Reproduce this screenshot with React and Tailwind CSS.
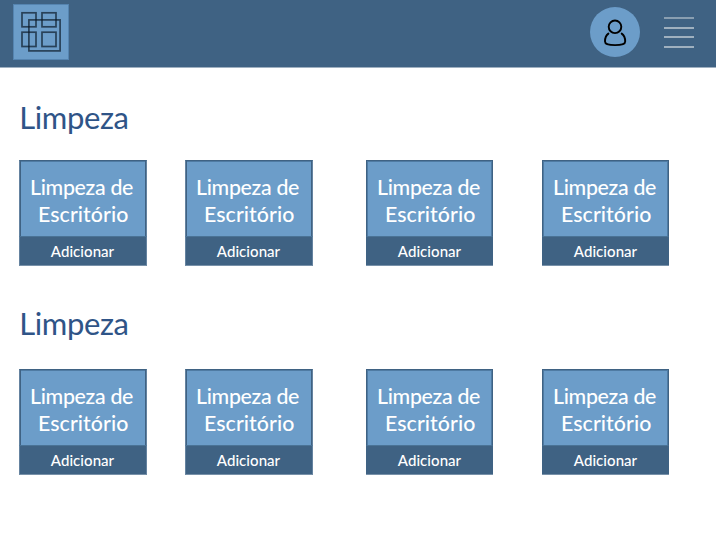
function Logo() {
  return (
    <div className="size-14 border border-[#5584b0] bg-[#6c9dc9]">
      <svg viewBox="0 0 54 54" className="block size-[54px]" fill="none" stroke="#0c1a28" strokeOpacity="0.7" strokeWidth="1.7">
        <rect x="8" y="7.8" width="14" height="14" />
        <rect x="28" y="7.8" width="14" height="14" />
        <rect x="8" y="27.2" width="14" height="14.3" />
        <rect x="28" y="27.2" width="14" height="14.3" />
        <rect x="14.9" y="14.9" width="31.2" height="31" />
      </svg>
    </div>
  );
}

function Avatar() {
  return (
    <div className="mr-6 size-[50px] rounded-full bg-[#6c9dc9]">
      <svg viewBox="0 0 50 50" className="block size-full" fill="none" stroke="#000" strokeWidth="1.9" strokeLinecap="round">
        <circle cx="25" cy="19.8" r="6.3" />
        <path d="M18.4 26.6 C16.4 28 15 31.2 15 34.4 C15 37 19.5 38.1 25 38.1 C30.5 38.1 35.2 37 35.2 34.4 C35.2 31.2 33.7 28 31.7 26.6" />
      </svg>
    </div>
  );
}

function Menu() {
  return (
    <div className="flex w-[30px] flex-col">
      <span className="h-0.5 bg-[#899eb1]" />
      <span className="mt-2 h-0.5 bg-[#9fb0bf]" />
      <span className="mt-[7px] h-0.5 bg-[#9fb0bf]" />
      <span className="mt-2 h-0.5 bg-[#9fb0bf]" />
    </div>
  );
}

function Card({ narrow }) {
  const frame = narrow
    ? 'border-x-[#3f6283] shadow-[inset_1px_1px_0_#4f7ba3,inset_-1px_0_0_#4f7ba3]'
    : 'border-x-[#6583a0] shadow-[inset_1px_0_0_#3f6283,inset_-1px_0_0_#3f6283,inset_0_1px_0_#4f7ba3]';
  return (
    <div className={narrow ? 'w-[127px]' : 'w-32'}>
      <div className={`h-[77px] border border-t-[#3f6283] border-b-[#4a7396] bg-[#6c9dc9] pt-[13px] pl-2.5 text-[21.33px] leading-[27px] font-medium whitespace-nowrap text-white ${frame}`}>
        <p className="tracking-[-0.3px]">Limpeza de</p>
        <p className="pl-2 tracking-[0.1px]">Escritório</p>
      </div>
      <div className={`h-[29px] border-b border-b-[#7891a9] bg-[#3f6283] text-center text-[15px] leading-[29px] font-medium tracking-[0.05px] text-white ${narrow ? '' : 'border-x border-x-[#6583a0] pr-px'}`}>
        Adicionar
      </div>
    </div>
  );
}

function Section({ className }) {
  return (
    <section className={className}>
      <h2 className="-ml-[0.7px] text-[31px] leading-10 tracking-[-0.4px] text-[#2f5487]">Limpeza</h2>
      <div className="-ml-px flex">
        <Card />
        <div className="ml-[38px]"><Card /></div>
        <div className="ml-[53px]"><Card narrow /></div>
        <div className="ml-[49px]"><Card narrow /></div>
      </div>
    </section>
  );
}

export default function App() {
  return (
    <div className="h-[553px] w-[716px] overflow-hidden bg-white font-['Lato',sans-serif]">
      <header className="flex h-17 items-start border-b border-[#9fb0c1] bg-[#3f6283] pl-[13px]">
        <div className="pt-1"><Logo /></div>
        <div className="ml-auto flex pr-[22px] pt-[7px]">
          <Avatar />
          <div className="pt-2.5"><Menu /></div>
        </div>
      </header>
      <main className="pl-5">
        <Section className="pt-[29px] [&>h2]:mb-[23px]" />
        <Section className="pt-[37px] [&>h2]:mb-[26px]" />
      </main>
    </div>
  );
}
